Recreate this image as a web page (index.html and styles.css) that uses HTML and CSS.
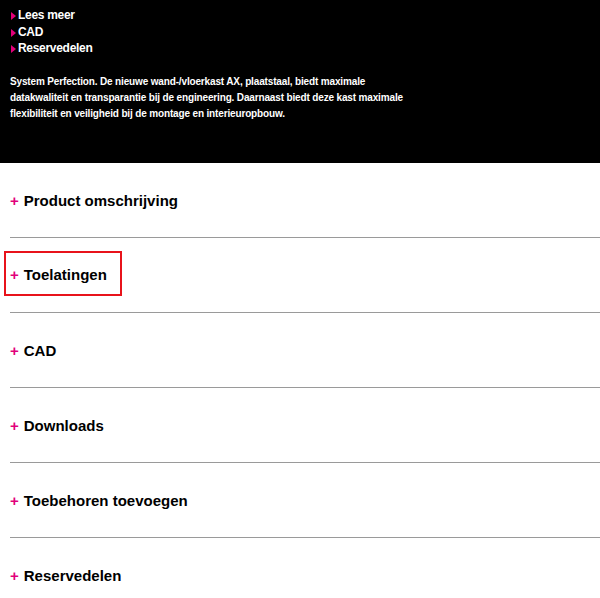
FILE: index.html
```html
<!DOCTYPE html>
<html lang="nl">
<head>
    <meta charset="UTF-8">
    <meta name="viewport" content="width=device-width, initial-scale=1.0">
    <title>AX wand-/vloerkast</title>
    <link rel="stylesheet" href="styles.css">
</head>
<body>
    <div class="intro">
        <ul class="quick-links">
            <li><a href="#">Lees meer</a></li>
            <li><a href="#">CAD</a></li>
            <li><a href="#">Reservedelen</a></li>
        </ul>
        <p class="intro-text">System Perfection. De nieuwe wand-/vloerkast AX, plaatstaal, biedt maximale datakwaliteit en transparantie bij de engineering. Daarnaast biedt deze kast maximale flexibiliteit en veiligheid bij de montage en interieuropbouw.</p>
    </div>

    <div class="accordion">
        <div class="accordion-item">
            <h3 class="accordion-title"><span class="plus">+</span>Product omschrijving</h3>
        </div>
        <div class="accordion-item">
            <h3 class="accordion-title highlight"><span class="plus">+</span>Toelatingen</h3>
        </div>
        <div class="accordion-item">
            <h3 class="accordion-title"><span class="plus">+</span>CAD</h3>
        </div>
        <div class="accordion-item">
            <h3 class="accordion-title"><span class="plus">+</span>Downloads</h3>
        </div>
        <div class="accordion-item">
            <h3 class="accordion-title"><span class="plus">+</span>Toebehoren toevoegen</h3>
        </div>
        <div class="accordion-item">
            <h3 class="accordion-title"><span class="plus">+</span>Reservedelen</h3>
        </div>
    </div>
</body>
</html>
```

FILE: styles.css
```css
body {
    font-family: "Liberation Sans", Arial, sans-serif;
    background-color: #fff;
    color: #000;
    margin: 0;
    padding: 0;
}

.intro {
    background-color: #000;
    color: #fff;
    height: 163px;
    padding: 6px 10px 0;
    box-sizing: border-box;
}

.quick-links {
    list-style: none;
    margin: 0;
    padding: 0;
}

.quick-links li {
    height: 16.5px;
    line-height: 16px;
}

.quick-links a {
    color: #fff;
    font-size: 12px;
    font-weight: bold;
    letter-spacing: -0.3px;
    text-decoration: none;
}

/* small magenta arrow in front of each link */
.quick-links a::before {
    content: "";
    display: inline-block;
    width: 0;
    height: 0;
    border-top: 4px solid transparent;
    border-bottom: 4px solid transparent;
    border-left: 5px solid #e2007a;
    margin: 0 2px 0 1px;
    vertical-align: -1px;
}

.intro-text {
    max-width: 400px;
    margin: 18px 0 0;
    font-size: 10px;
    font-weight: bold;
    letter-spacing: -0.15px;
    line-height: 16px;
}

.accordion {
    margin-left: 10px;
}

.accordion-item {
    height: 74px;
    display: flex;
    align-items: center;
    border-bottom: 1px solid #9a9a9a;
}

.accordion-title {
    display: inline-block;
    margin: 0 0 0 -6px;
    padding: 12px 13px 12px 4px;
    border: 2px solid transparent;
    font-size: 15px;
    line-height: 17px;
    font-weight: bold;
}

.accordion-title.highlight {
    border-color: #e8131b;
    padding-top: 13px;
    padding-bottom: 11px;
    margin-top: -3px;
}

.plus {
    color: #e2007a;
    margin-right: 5px;
}
```
